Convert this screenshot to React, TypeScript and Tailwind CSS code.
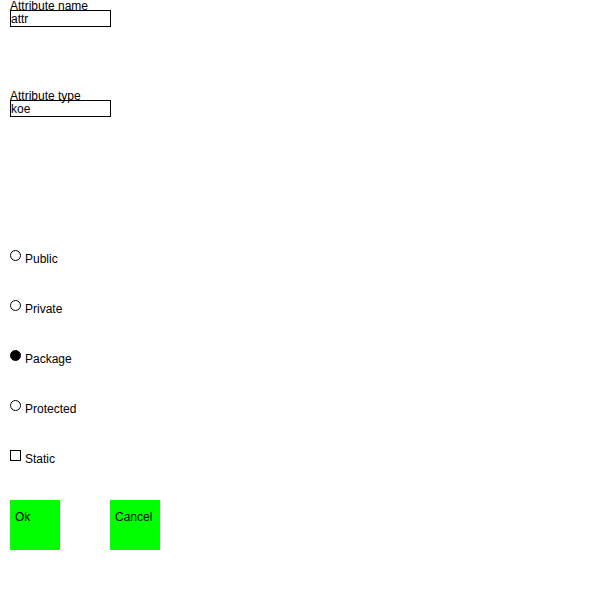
import React from "react";

const font = { fontFamily: '"Liberation Sans", Arial, sans-serif' };

function Field({ label, value }: { label: string; value: string }) {
  return (
    <div className="flex flex-col">
      <label className="block h-[10px] text-[12px] leading-[12px] text-black">{label}</label>
      <input
        readOnly
        defaultValue={value}
        className="box-border h-[17px] w-[101px] border border-black bg-transparent px-0 text-[12px] leading-[15px] text-black outline-none"
      />
    </div>
  );
}

function Radio({ label, checked }: { label: string; checked?: boolean }) {
  return (
    <div className="flex h-[50px] items-start">
      <span
        className={`box-border block h-[11px] w-[11px] rounded-full border border-black ${checked ? "bg-black" : "bg-white"}`}
      />
      <span className="ml-[4px] mt-[3px] text-[12px] leading-[12px] text-black">{label}</span>
    </div>
  );
}

export default function App() {
  return (
    <div className="h-[600px] w-[600px] bg-white pl-[10px] text-black" style={font}>
      <Field label="Attribute name" value="attr" />
      <div className="mt-[63px]">
        <Field label="Attribute type" value="koe" />
      </div>

      <div className="mt-[133px] flex flex-col">
        <Radio label="Public" />
        <Radio label="Private" />
        <Radio label="Package" checked />
        <Radio label="Protected" />
        <div className="flex h-[50px] items-start">
          <span className="box-border block h-[11px] w-[11px] border border-black bg-white" />
          <span className="ml-[4px] mt-[3px] text-[12px] leading-[12px] text-black">Static</span>
        </div>
      </div>

      <div className="flex gap-[50px]">
        <button className="flex h-[50px] w-[50px] items-start bg-[#00ff00] pl-[5px] pt-[11px] text-left text-[12px] leading-[12px] text-black">
          Ok
        </button>
        <button className="flex h-[50px] w-[50px] items-start bg-[#00ff00] pl-[5px] pt-[11px] text-left text-[12px] leading-[12px] text-black">
          Cancel
        </button>
      </div>
    </div>
  );
}
